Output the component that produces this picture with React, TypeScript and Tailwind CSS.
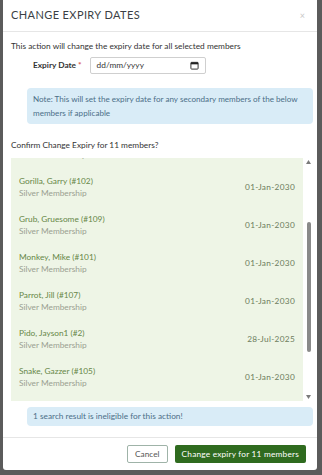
const members = [
  { name: "Frog, Fred (#110)", plan: "Silver Membership", date: "01-Jan-2030" },
  { name: "Gorilla, Garry (#102)", plan: "Silver Membership", date: "01-Jan-2030" },
  { name: "Grub, Gruesome (#109)", plan: "Silver Membership", date: "01-Jan-2030" },
  { name: "Monkey, Mike (#101)", plan: "Silver Membership", date: "01-Jan-2030" },
  { name: "Parrot, Jill (#107)", plan: "Silver Membership", date: "01-Jan-2030" },
  { name: "Pido, Jayson1 (#2)", plan: "Silver Membership", date: "28-Jul-2025" },
  { name: "Snake, Gazzer (#105)", plan: "Silver Membership", date: "01-Jan-2030" },
];

export default function App() {
  return (
    <div
      className="w-[322px] h-[475px] bg-[#5b5b5b] pl-[3px] overflow-hidden"
      style={{ fontFamily: "Lato, 'Noto Sans', sans-serif" }}
    >
      <div className="w-[314px] h-[470px] bg-white rounded-b-[3px] flex flex-col">
        {/* 헤더 */}
        <div className="h-[32px] border-b border-[#e6e6e6] flex items-center justify-between px-2">
          <h2 className="text-[11px] tracking-[0.4px] text-[#3b3f45]">CHANGE EXPIRY DATES</h2>
          <span className="text-[9px] text-[#c8c8c8] mr-[4px]">×</span>
        </div>

        {/* 본문 */}
        <div className="flex flex-col flex-1 pl-2 pr-[4px]">
          <p className="text-[8.3px] text-[#333] mt-[9px] leading-[10px]">
            This action will change the expiry date for all selected members
          </p>

          <div className="flex items-center mt-[6px] ml-[22px] gap-[8px]">
            <label className="text-[8.3px] font-bold text-[#333]">
              Expiry Date <span className="text-[#d9534f]">*</span>
            </label>
            <div className="w-[116px] h-[17px] border border-[#cfcfcf] rounded-[2px] flex items-center justify-between px-[6px]">
              <span className="text-[8.3px] text-[#333]">dd/mm/yyyy</span>
              <svg width="9" height="9" viewBox="0 0 10 10">
                <rect x="1" y="1.5" width="8" height="7.5" rx="0.8" fill="none" stroke="#222" strokeWidth="1" />
                <rect x="1" y="1.5" width="8" height="2.2" fill="#222" />
              </svg>
            </div>
          </div>

          <div className="ml-[16px] mt-[14px] bg-[#d9ecf7] rounded-[4px] pl-[6px] pr-[4px] py-[4px] text-[8.1px] leading-[14px] text-[#4c6f88]">
            Note: This will set the expiry date for any secondary members of the below members if applicable
          </div>

          <p className="text-[8.3px] text-[#333] mt-[16px] leading-[10px]">Confirm Change Expiry for 11 members?</p>

          {/* 회원 목록 */}
          <div className="flex mt-[8px] h-[243px]">
            <div className="w-[292px] bg-[#eef5e6] overflow-hidden">
              <div className="-mt-[28px]">
                {members.map((m) => (
                  <div key={m.name} className="h-[38px] flex items-center justify-between px-2">
                    <div className="flex flex-col">
                      <span className="text-[8.3px] leading-[12px] text-[#668746]">{m.name}</span>
                      <span className="text-[8.3px] leading-[13px] text-[#9aa091]">{m.plan}</span>
                    </div>
                    <span className="text-[8.3px] text-[#6d7c5c] tracking-[0.3px]">{m.date}</span>
                  </div>
                ))}
              </div>
            </div>
            <div className="w-[9px] ml-[1px] flex flex-col items-center justify-between py-[2px]">
              <svg width="5" height="4" viewBox="0 0 5 4">
                <path d="M0 4 L2.5 0 L5 4 Z" fill="#7a7a7a" />
              </svg>
              <div className="flex-1 w-full flex flex-col py-[2px]">
                <div className="h-[56px]" />
                <div className="mx-auto w-[4px] h-[130px] rounded-full bg-[#8a8a8a]" />
              </div>
              <svg width="5" height="4" viewBox="0 0 5 4">
                <path d="M0 0 L2.5 4 L5 0 Z" fill="#7a7a7a" />
              </svg>
            </div>
          </div>

          <div className="ml-[16px] mt-[6px] bg-[#d9ecf7] rounded-[4px] px-[6px] h-[19px] flex items-center text-[8.3px] text-[#4c6f88]">
            1 search result is ineligible for this action!
          </div>
        </div>

        {/* 푸터 */}
        <div className="h-[33px] border-t border-[#e6e6e6] flex items-center justify-end gap-[7px] pr-[11px]">
          <button className="h-[18px] px-[7px] border border-[#9fb3a8] rounded-[2px] text-[8.3px] text-[#555]">
            Cancel
          </button>
          <button className="h-[18px] px-[7px] bg-[#2f6b1f] rounded-[2px] text-[8.3px] text-white tracking-[0.2px]">
            Change expiry for 11 members
          </button>
        </div>
      </div>
    </div>
  );
}
